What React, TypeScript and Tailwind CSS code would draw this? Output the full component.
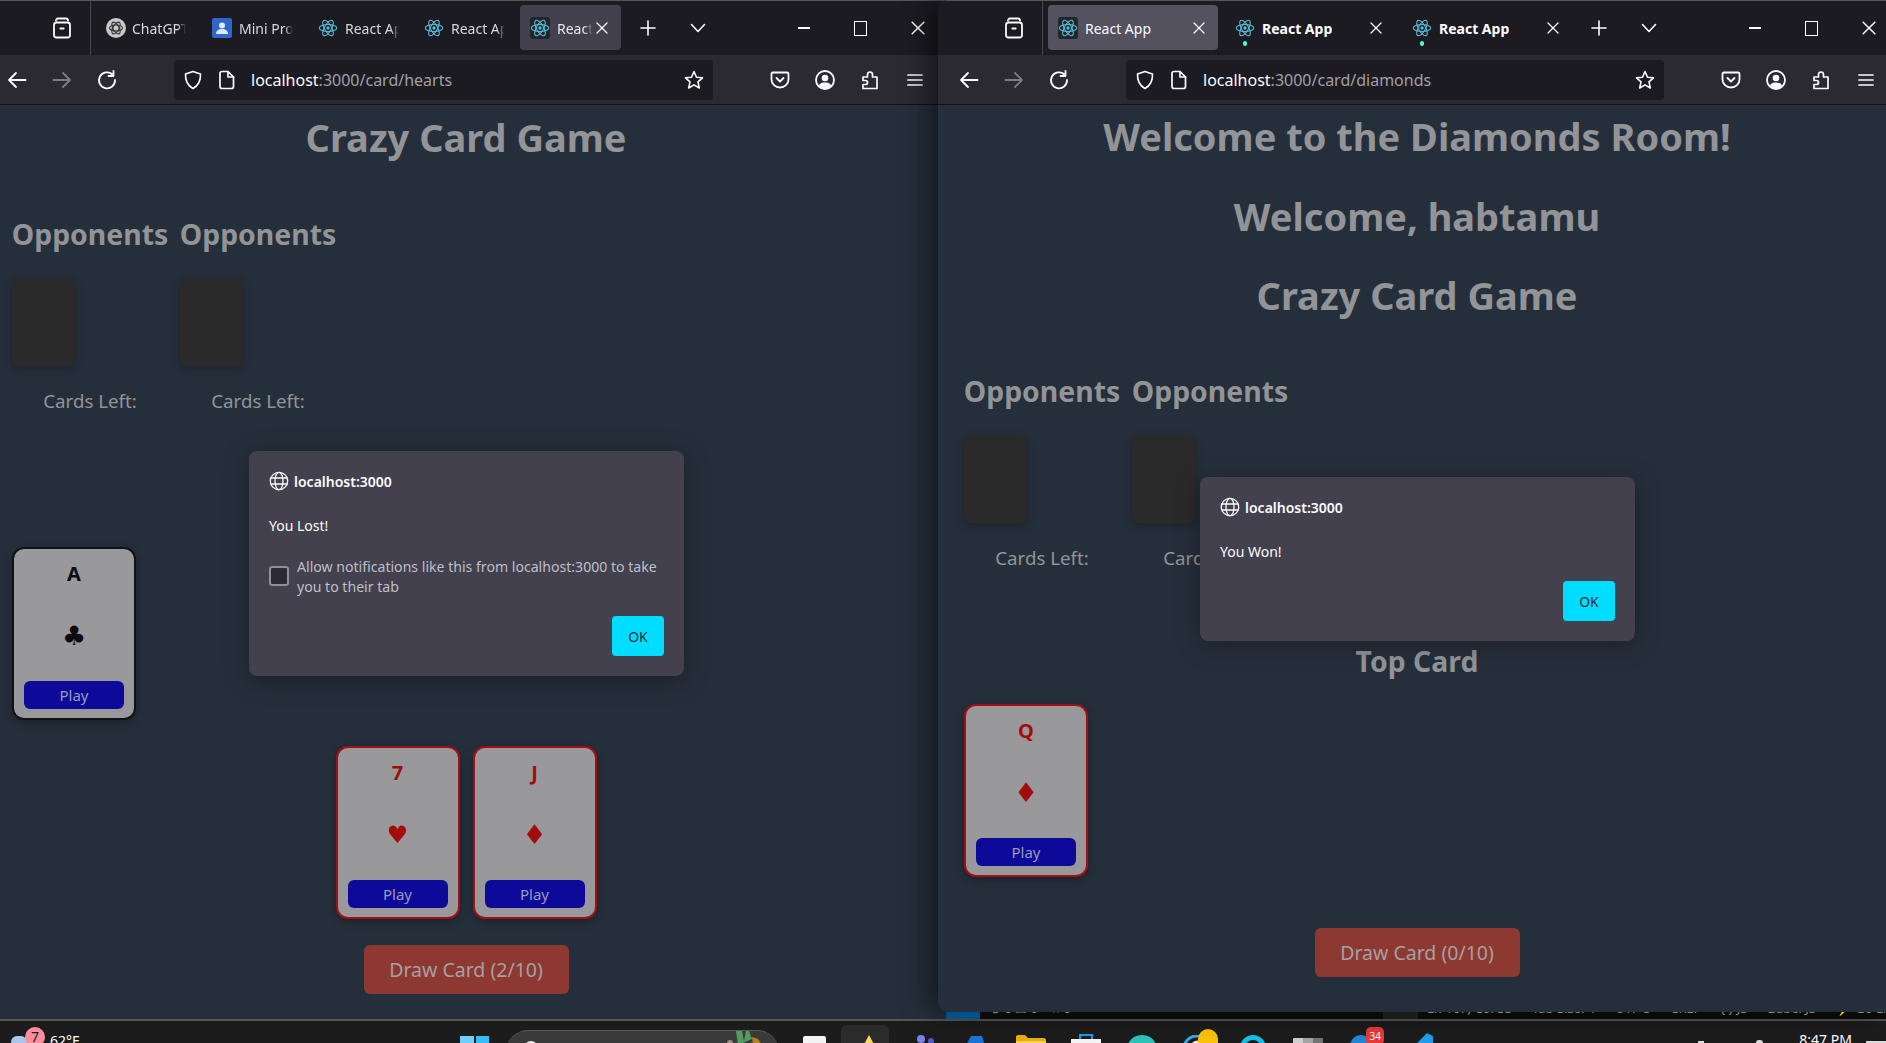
import React from "react";

const UI = "font-['Noto_Sans','Open_Sans',sans-serif]";

function ReactIcon({ boxed }: { boxed?: boolean }) {
  return (
    <span className={`flex w-[20px] h-[22px] items-center justify-center shrink-0 rounded-[3px] ${boxed ? "bg-[#20262c]" : ""}`}>
      <svg width="20" height="20" viewBox="0 0 24 24" fill="none" stroke="#58bcd6" strokeWidth="1.3">
        <ellipse cx="12" cy="12" rx="10.5" ry="4.2" />
        <ellipse cx="12" cy="12" rx="10.5" ry="4.2" transform="rotate(60 12 12)" />
        <ellipse cx="12" cy="12" rx="10.5" ry="4.2" transform="rotate(120 12 12)" />
        <circle cx="12" cy="12" r="2" fill="#58bcd6" stroke="none" />
      </svg>
    </span>
  );
}

function GptIcon() {
  return (
    <svg width="20" height="20" viewBox="0 0 20 20" className="shrink-0">
      <circle cx="10" cy="10" r="10" fill="#c9c9c9" />
      <g fill="none" stroke="#333" strokeWidth="1.2">
        <ellipse cx="10" cy="10" rx="6.5" ry="3" />
        <ellipse cx="10" cy="10" rx="6.5" ry="3" transform="rotate(60 10 10)" />
        <ellipse cx="10" cy="10" rx="6.5" ry="3" transform="rotate(120 10 10)" />
      </g>
    </svg>
  );
}

function MiniIcon() {
  return (
    <svg width="20" height="20" viewBox="0 0 20 20" className="shrink-0">
      <rect width="20" height="20" rx="2" fill="#2f66c9" />
      <circle cx="10" cy="7.5" r="3" fill="#dfe8f7" />
      <path d="M4 16c0-3.2 2.6-5 6-5s6 1.8 6 5z" fill="#dfe8f7" />
    </svg>
  );
}

const S = { fill: "none", stroke: "currentColor", strokeWidth: 1.8, strokeLinecap: "round" as const, strokeLinejoin: "round" as const };

const Archive = () => (
  <svg width="20" height="22" viewBox="0 0 20 22" {...S}>
    <path d="M4 3.5c0-1.2.8-2 2-2h8c1.200 0 2 .8 2 2" />
    <rect x="2" y="5.500" width="16" height="15" rx="2.500" />
    <path d="M8.500 11.500h3" strokeWidth="2.200" />
  </svg>
);
const Cross = ({ s = 12 }: { s?: number }) => (
  <svg width={s} height={s} viewBox="0 0 12 12" {...S} strokeWidth={1.3}>
    <path d="M1 1l10 10M11 1L1 11" />
  </svg>
);
const Plus = () => (
  <svg width="16" height="16" viewBox="0 0 16 16" {...S} strokeWidth={1.6}>
    <path d="M8 1v14M1 8h14" />
  </svg>
);
const Chevron = () => (
  <svg width="16" height="10" viewBox="0 0 16 10" {...S} strokeWidth={1.6}>
    <path d="M1.500 1.500L8 8.500l6.500-7" />
  </svg>
);
const Back = () => (
  <svg width="20" height="18" viewBox="0 0 20 18" {...S}>
    <path d="M18.500 9H2M9 2L2 9l7 7" />
  </svg>
);
const Forward = () => (
  <svg width="20" height="18" viewBox="0 0 20 18" {...S}>
    <path d="M1.500 9H18M11 2l7 7-7 7" />
  </svg>
);
const Reload = () => (
  <svg width="20" height="20" viewBox="0 0 20 20" {...S}>
    <path d="M15.500 4.500A8 8 0 1 0 18 10" />
    <path d="M16.500 1v5h-5" />
  </svg>
);
const Shield = () => (
  <svg width="18" height="20" viewBox="0 0 18 20" {...S} strokeWidth={1.6}>
    <path d="M9 1.500l7.500 2.500c.3 6.500-2 11.500-7.500 14.500C3.500 15.500 1.200 10.500 1.500 4z" />
  </svg>
);
const FileIcon = () => (
  <svg width="16" height="20" viewBox="0 0 16 20" {...S} strokeWidth={1.7}>
    <path d="M3 1.500h6l5.500 5.500v9.500c0 1.200-.8 2-2 2H3c-1.200 0-2-.8-2-2v-13c0-1.200.8-2 2-2z" />
    <path d="M9 1.500V7h5.500" />
  </svg>
);
const Star = () => (
  <svg width="20" height="20" viewBox="0 0 20 20" {...S} strokeWidth={1.6}>
    <path d="M10 1.500l2.500 5.700 6 .6-4.500 4.100 1.300 6.100L10 14.900 4.700 18l1.300-6.100L1.500 7.800l6-.6z" />
  </svg>
);
const Pocket = () => (
  <svg width="20" height="18" viewBox="0 0 20 18" {...S}>
    <path d="M3 1.500h14c1 0 1.500.6 1.500 1.500v5.500c0 4.500-3.800 8-8.500 8s-8.500-3.500-8.500-8V3c0-.9.5-1.500 1.500-1.500z" />
    <path d="M6.500 7l3.500 3.500L13.500 7" />
  </svg>
);
const Account = () => (
  <svg width="20" height="20" viewBox="0 0 20 20">
    <circle cx="10" cy="10" r="9" fill="none" stroke="currentColor" strokeWidth="1.800" />
    <circle cx="10" cy="8" r="3.300" fill="currentColor" />
    <path d="M3.800 15.500C5 13 7.300 12.500 10 12.500s5 .5 6.200 3A8 8 0 0 1 3.800 15.500z" fill="currentColor" />
  </svg>
);
const Puzzle = () => (
  <svg width="18" height="20" viewBox="0 0 18 20" {...S} strokeWidth={1.7}>
    <path d="M2 7h4.500V4.500a2.500 2.500 0 0 1 5 0V7H16v11.500H2v-4h2.500a2 2 0 0 0 0-4H2z" />
  </svg>
);
const Menu = () => (
  <svg width="16" height="14" viewBox="0 0 16 14" {...S} strokeWidth={1.7}>
    <path d="M1 2h14M1 7h14M1 12h14" />
  </svg>
);
const Globe = () => (
  <svg width="20" height="20" viewBox="0 0 20 20" fill="none" stroke="#fbfbfe" strokeWidth="1.300" className="shrink-0">
    <circle cx="10" cy="10" r="8.700" />
    <ellipse cx="10" cy="10" rx="4" ry="8.700" />
    <path d="M1.800 7h16.400M1.800 13h16.400" />
  </svg>
);

type Tab = {
  icon: React.ReactNode;
  label: string;
  active?: boolean;
  close?: boolean;
  dot?: boolean;
  labelClass: string;
};

function Browser({
  tabs,
  tabClass,
  gapClass,
  activeBg,
  host,
  path,
  urlClass,
  insetClass,
}: {
  tabs: Tab[];
  tabClass: string;
  gapClass: string;
  activeBg: string;
  host: string;
  path: string;
  urlClass: string;
  insetClass: string;
}) {
  return (
    <div className={`${UI} shrink-0`}>
      <div className={`flex h-[55px] bg-[#1c1b22] border-t border-[#55555a] text-[#fbfbfe] overflow-hidden ${insetClass}`}>
        <div className="w-[34px] ml-[45px] flex items-center justify-center h-[54px] shrink-0">
          <Archive />
        </div>
        <div className="w-px h-[54px] ml-[11px] bg-[#4a4a50] shrink-0" />
        <div className={`flex ml-[5px] mt-[4px] h-[45px] shrink-0 ${gapClass}`}>
          {tabs.map((t, i) => (
            <div
              key={i}
              className={`relative flex items-center pl-[10px] rounded-[4px] shrink-0 ${tabClass} ${t.active ? activeBg : ""}`}
            >
              {t.icon}
              <span className={`overflow-hidden whitespace-nowrap pt-[1px] ${t.labelClass}`}>{t.label}</span>
              {t.close && (
                <span className="ml-auto mr-[13px]">
                  <Cross />
                </span>
              )}
              {t.dot && <span className="absolute left-[18px] top-[36px] w-[4px] h-[5px] rounded-full bg-[#54ffbd]" />}
            </div>
          ))}
        </div>
        <div className="w-[50px] ml-[2px] h-[54px] flex items-center justify-center shrink-0">
          <Plus />
        </div>
        <div className="w-[50px] h-[54px] flex items-center justify-center shrink-0">
          <Chevron />
        </div>
        <div className="w-[57px] ml-[52px] h-[54px] flex items-center justify-center shrink-0">
          <span className="w-[12px] h-[1.500px] bg-[#fbfbfe]" />
        </div>
        <div className="w-[57px] h-[54px] flex items-center justify-center shrink-0">
          <span className="w-[13px] h-[15px] border border-[#fbfbfe]" />
        </div>
        <div className="w-[57px] h-[54px] flex items-center justify-center shrink-0">
          <Cross s={14} />
        </div>
      </div>
      <div className={`flex items-center h-[50px] bg-[#2b2a33] border-b border-[#111118] text-[#fbfbfe] overflow-hidden ${insetClass}`}>
        <div className="w-[34px] flex justify-center shrink-0"><Back /></div>
        <div className="w-[34px] ml-[11px] flex justify-center text-[#7c7c84] shrink-0"><Forward /></div>
        <div className="w-[34px] ml-[11px] flex justify-center shrink-0"><Reload /></div>
        <div className={`flex items-center h-[40px] ml-[50px] bg-[#1c1b22] rounded-[4px] pl-[10px] pr-[9px] shrink-0 ${urlClass}`}>
          <Shield />
          <span className="ml-[17px]"><FileIcon /></span>
          <span className="ml-[16px] mt-[1px] text-[16px] whitespace-nowrap">
            <span className="text-[#fbfbfe]">{host}</span>
            <span className="text-[#a0a0a6]">{path}</span>
          </span>
          <span className="ml-auto"><Star /></span>
        </div>
        <div className="w-[45px] ml-[44px] flex justify-center shrink-0"><Pocket /></div>
        <div className="w-[45px] flex justify-center shrink-0"><Account /></div>
        <div className="w-[45px] flex justify-center shrink-0"><Puzzle /></div>
        <div className="w-[45px] flex justify-center shrink-0"><Menu /></div>
      </div>
    </div>
  );
}

const PAGE = "font-['Noto_Sans',sans-serif] text-[#929497]";

function Heading({ children, className = "" }: { children: React.ReactNode; className?: string }) {
  return <h1 className={`text-center text-[38px] leading-[38px] pb-[2px] font-bold whitespace-nowrap ${className}`}>{children}</h1>;
}

function Opponent() {
  return (
    <div className="w-[156px] flex flex-col items-center">
      <h2 className="text-[28.4px] leading-[34px] pb-[2px] font-bold whitespace-nowrap">Opponents</h2>
      <div className="self-start mt-[25px] w-[63px] h-[88px] rounded-[6px] bg-[#2a2a2b] shadow-[0_3px_8px_rgba(0,0,0,0.25)]" />
      <div className="mt-[23px] text-[18.7px] leading-[24px]">Cards Left:</div>
    </div>
  );
}

function Opponents({ className = "" }: { className?: string }) {
  return (
    <div className={`flex gap-[12px] pl-[12px] ${className}`}>
      <Opponent />
      <Opponent />
    </div>
  );
}

function PlayingCard({ rank, suit, suitClass, red }: { rank: string; suit: string; suitClass: string; red?: boolean }) {
  return (
    <div
      className={`w-[124px] h-[173px] shrink-0 rounded-[12px] border-2 bg-[#99989a] flex flex-col items-center shadow-[0_3px_8px_rgba(0,0,0,0.3)] ${
        red ? "border-[#a30f14] text-[#a30c0c]" : "border-[#111114] text-[#0c0c0e]"
      }`}
    >
      <div className="mt-[11px] text-[20px] leading-[28px] font-bold">{rank}</div>
      <div className={`mt-[28px] h-[40px] leading-[40px] font-['DejaVu_Sans',sans-serif] ${suitClass}`}>{suit}</div>
      <button className="mt-[25px] w-[100px] h-[28px] rounded-[6px] bg-[#0d0a99] text-[15px] text-[#9a9ab8]">Play</button>
    </div>
  );
}

function DrawButton({ children, className = "" }: { children: React.ReactNode; className?: string }) {
  return (
    <button className={`block w-[205px] h-[49px] rounded-[6px] bg-[#8e3832] text-[19.5px] text-[#a5a0a0] ${className}`}>
      {children}
    </button>
  );
}

function Dialog({
  message,
  allow,
  className,
}: {
  message: string;
  allow?: boolean;
  className: string;
}) {
  return (
    <div className={`absolute w-[435px] rounded-[8px] bg-[#42414d] pt-[20px] px-[20px] shadow-[0_4px_24px_rgba(0,0,0,0.35)] ${UI} ${className}`}>
      <div className="flex items-center h-[20px] gap-[5px] text-[14px] font-semibold text-[#fbfbfe]">
        <Globe />
        localhost:3000
      </div>
      <p className="mt-[25px] h-[20px] text-[14px] leading-[20px] text-[#fbfbfe]">{message}</p>
      {allow && (
        <label className="flex items-center mt-[19px] gap-[8px]">
          <span className="w-[20px] h-[20px] shrink-0 rounded-[3px] border-2 border-[#8f8f9d] bg-[#2b2a33]" />
          <span className="text-[14.1px] leading-[20px] pt-[2px] text-[#bfbfc9]">
            Allow notifications like this from localhost:3000 to take you to their tab
          </span>
        </label>
      )}
      <div className={`flex justify-end pb-[20px] mt-[19px]`}>
        <button className="w-[52px] h-[40px] rounded-[4px] bg-[#00ddff] text-[14px] text-[#2b2a33]">OK</button>
      </div>
    </div>
  );
}

function StatusStrip() {
  return (
    <div className="ml-[8px] h-[7px] bg-[#0a0a0a] flex overflow-hidden font-['Noto_Sans',sans-serif] text-[13px] leading-[18px] text-[#8a8a8a]">
      <div className="w-[34px] h-full bg-[#00508b] shrink-0" />
      <div className="flex -mt-[13px] ml-[10px] w-[393px] shrink-0 gap-[14px] whitespace-nowrap">
        <span>⊗ 0 ⚠ 0</span>
        <span>⑃ 0</span>
      </div>
      <div className="w-[35px] h-full bg-[#1c1c1e] shrink-0" />
      <div className="flex -mt-[13px] ml-[9px] gap-[20px] whitespace-nowrap">
        <span>Ln 167, Col 33</span>
        <span>Tab Size: 4</span>
        <span>UTF-8</span>
        <span>CRLF</span>
        <span>{"{ }"} JS</span>
        <span>Babel JS</span>
        <span>⚡ Go Live</span>
      </div>
    </div>
  );
}

function Taskbar() {
  return (
    <div className="relative h-[24px] border-t-2 border-[#555] bg-[#1c1c1c] overflow-hidden font-['Noto_Sans',sans-serif]">
      <div className="flex items-start h-full">
        {/* weather */}
        <div className="relative w-[48px] h-full shrink-0">
          <span className="absolute left-[11px] top-[15px] w-[16px] h-[12px] rounded-full bg-[#a9c8ee]" />
          <span className="absolute left-[25px] top-[6px] w-[20px] h-[20px] rounded-full bg-[#ff8d9b] text-[14px] leading-[20px] text-center text-[#1c1c1c]">7</span>
        </div>
        <span className="ml-[2px] mt-[10px] text-[14px] leading-[20px] text-white">62°F</span>
        {/* start */}
        <div className="ml-[381px] mt-[15px] grid grid-cols-2 gap-[2px] w-[29px] shrink-0">
          <span className="h-[14px] bg-[#6fd0fb]" />
          <span className="h-[14px] bg-[#35bdf7]" />
        </div>
        {/* search */}
        <div className="relative ml-[17px] mt-[9px] w-[273px] h-[24px] shrink-0 rounded-t-[22px] bg-[#3a3a3a] border-t border-[#5a5a5a]">
          <span className="absolute left-[18px] top-[10px] w-[14px] h-[14px] rounded-full border-2 border-[#eee]" />
          <svg className="absolute left-[218px] top-0" width="46" height="14" viewBox="0 0 46 14">
            <path d="M14 14L12 0h6l2 10 2-10h3l3 8" fill="#4f9d62" />
            <path d="M28 6l6 2 4 6h-9z" fill="#b58321" />
            <circle cx="6" cy="12" r="3" fill="#9a8f88" />
          </svg>
        </div>
        {/* app icons */}
        <span className="ml-[24px] mt-[15px] w-[23px] h-[20px] bg-[#f4f4f4] rounded-[2px] shrink-0" />
        <div className="relative ml-[15px] mt-[4px] w-[48px] h-[24px] shrink-0 rounded-t-[6px] bg-[#2b2b2b]">
          <svg className="absolute left-[12px] top-[9px]" width="26" height="16" viewBox="0 0 26 16">
            <path d="M2 16l4-7 3 4z" fill="#f17f2f" />
            <path d="M8 16L16 1l8 15z" fill="#fbd85a" />
          </svg>
        </div>
        <svg className="ml-[17px] mt-[14px] shrink-0" width="30" height="14" viewBox="0 0 30 14">
          <circle cx="15" cy="4" r="4" fill="#7b83eb" />
          <circle cx="25" cy="6" r="3" fill="#5059c9" />
          <rect x="4" y="8" width="18" height="6" fill="#6a70d8" />
        </svg>
        <svg className="ml-[28px] mt-[14px] shrink-0" width="22" height="14" viewBox="0 0 22 14">
          <path d="M0 14L7 1h11l4 13z" fill="#1976d8" />
        </svg>
        <svg className="ml-[30px] mt-[14px] shrink-0" width="30" height="14" viewBox="0 0 30 14">
          <path d="M0 14V2c0-1 .5-2 2-2h7l3 3h16c1 0 2 1 2 2v9z" fill="#e9ae10" />
          <rect y="6" width="30" height="2" fill="#fad04d" />
        </svg>
        <svg className="ml-[25px] mt-[13px] shrink-0" width="30" height="16" viewBox="0 0 30 16">
          <path d="M9 5V1h12v4" fill="none" stroke="#18a0f0" strokeWidth="2" />
          <rect y="5" width="30" height="11" fill="#f5f5f5" />
        </svg>
        <svg className="ml-[26px] mt-[14px] shrink-0" width="30" height="14" viewBox="0 0 30 14">
          <path d="M0 14C1 5 7 0 15 0s14 5 15 14z" fill="#2cc3b8" />
          <path d="M18 14C22 8 26 6 30 14z" fill="#84d64c" />
        </svg>
        <div className="relative ml-[26px] w-[36px] h-full shrink-0">
          <svg className="absolute left-0 top-[14px]" width="26" height="14" viewBox="0 0 26 14">
            <path d="M1 14C1 6 7 1 14 1s12 5 12 13" fill="none" stroke="#3ba7e6" strokeWidth="3" />
            <path d="M8 14c0-4 3-7 7-7s6 3 6 7" fill="none" stroke="#e8e8e8" strokeWidth="3" />
          </svg>
          <span className="absolute left-[15px] top-[8px] w-[20px] h-[26px] rounded-full bg-[#fdc20a]" />
        </div>
        <span className="ml-[21px] mt-[14px] w-[26px] h-[26px] rounded-full border-[5px] border-[#17bfe8] shrink-0" />
        <div className="ml-[27px] mt-[17px] w-[30px] h-[10px] flex shrink-0 rounded-t-[1px] overflow-hidden">
          <span className="w-[10px] bg-[#cfcfcf]" />
          <span className="w-[10px] bg-[#a4a4a4]" />
          <span className="w-[10px] bg-[#757575]" />
        </div>
        <div className="relative ml-[27px] w-[34px] h-full shrink-0">
          <span className="absolute left-0 top-[14px] w-[22px] h-[22px] rounded-full bg-[#1f86d6]" />
          <span className="absolute left-[16px] top-[6px] w-[18px] h-[18px] rounded-[5px] bg-[#e83a3a] text-[10px] leading-[18px] text-center text-white">34</span>
        </div>
        <svg className="ml-[19px] mt-[12px] shrink-0" width="30" height="18" viewBox="0 0 30 18">
          <path d="M0 12L14 18V10zM14 10L24 0l6 3v15H14z" fill="#1f9cf0" />
        </svg>
        {/* tray */}
        <span className="ml-[265px] mt-[20px] w-[6px] h-[2px] bg-[#ddd] shrink-0" />
        <span className="ml-[52px] mt-[19px] w-[7px] h-[3px] rounded-t-full bg-[#ddd] shrink-0" />
        <span className="ml-[36px] mt-[9px] text-[14px] leading-[20px] text-white whitespace-nowrap">8:47 PM</span>
        <span className="ml-[14px] mt-[20px] w-[20px] h-[3px] bg-[#ddd] shrink-0" />
      </div>
    </div>
  );
}

const t = (label: string, icon: React.ReactNode, labelClass: string, extra: Partial<Tab> = {}): Tab => ({
  label,
  icon,
  labelClass,
  ...extra,
});

const leftTabs: Tab[] = [
  t("ChatGPT", <GptIcon />, "ml-[6px] w-[54px] text-[14px] [mask-image:linear-gradient(to_right,black_85%,transparent)] text-[#d8d8dc]"),
  t("Mini Project", <MiniIcon />, "ml-[7px] w-[54px] text-[14px] [mask-image:linear-gradient(to_right,black_85%,transparent)] text-[#d8d8dc]"),
  t("React App", <ReactIcon />, "ml-[7px] w-[54px] text-[14px] [mask-image:linear-gradient(to_right,black_85%,transparent)] text-[#d8d8dc]"),
  t("React App", <ReactIcon />, "ml-[7px] w-[54px] text-[14px] [mask-image:linear-gradient(to_right,black_85%,transparent)] text-[#d8d8dc]"),
  t("React App", <ReactIcon boxed />, "ml-[7px] w-[36px] text-[14px] [mask-image:linear-gradient(to_right,black_75%,transparent)] text-[#e8e8ec]", { active: true, close: true }),
];

const rightTabs: Tab[] = [
  t("React App", <ReactIcon boxed />, "ml-[7px] text-[14px] text-[#fbfbfe]", { active: true, close: true }),
  t("React App", <ReactIcon />, "ml-[7px] text-[14px] font-bold text-white", { close: true, dot: true }),
  t("React App", <ReactIcon />, "ml-[7px] text-[14px] font-bold text-white", { close: true, dot: true }),
];

export default function App() {
  return (
    <div className="w-[1886px] h-[1043px] overflow-hidden bg-[#1c1c1c]">
      <div className="flex h-[1019px]">
        {/* left window */}
        <div className="w-[946px] shrink-0 flex flex-col bg-[#252f3b]">
          <Browser
            tabs={leftTabs}
            tabClass="w-[101px]"
            gapClass="gap-[5px]"
            activeBg="bg-[#42414d]"
            host="localhost"
            path=":3000/card/hearts"
            urlClass="w-[539px]"
            insetClass=""
          />
          <main className={`relative flex-1 ${PAGE}`}>
            <div className="w-[932px]">
              <Heading className="pt-[13px]">Crazy Card Game</Heading>
              <Opponents className="mt-[59px]" />
              <div className="mt-[134px] pl-[12px]">
                <PlayingCard rank="A" suit="♣" suitClass="text-[27px]" />
              </div>
              <div className="mt-[26px] flex justify-center gap-[13px]">
                <PlayingCard rank="7" suit="♥" suitClass="text-[24px]" red />
                <PlayingCard rank="J" suit="♦" suitClass="text-[27px]" red />
              </div>
              <div className="mt-[26px] flex justify-center">
                <DrawButton>Draw Card (2/10)</DrawButton>
              </div>
            </div>
            <Dialog
              className="left-[249px] top-[346px]"
              message="You Lost!"
              allow
            />
          </main>
        </div>

        {/* right window */}
        <div className="relative z-10 -ml-[8px] w-[948px] shrink-0 flex flex-col">
          <div className="h-[1012px] flex flex-col bg-[#252f3b] rounded-l-[10px] overflow-hidden shadow-[-8px_0_28px_rgba(0,0,0,0.55)]">
            <Browser
              tabs={rightTabs}
              tabClass="w-[170px]"
              gapClass="gap-[7px]"
              activeBg="bg-[#53525e]"
              host="localhost"
              path=":3000/card/diamonds"
              urlClass="w-[538px]"
              insetClass="pl-[14px]"
            />
            <main className={`relative flex-1 pl-[14px] ${PAGE}`}>
              <div className="w-[930px]">
                <Heading className="pt-[12px]">Welcome to the Diamonds Room!</Heading>
                <Heading className="mt-[40px]">Welcome, habtamu</Heading>
                <Heading className="mt-[39px]">Crazy Card Game</Heading>
                <Opponents className="mt-[58px]" />
                <h2 className="mt-[74px] text-center text-[28.4px] leading-[34px] pb-[2px] font-bold">Top Card</h2>
                <div className="mt-[24px] pl-[12px]">
                  <PlayingCard rank="Q" suit="♦" suitClass="text-[27px]" red />
                </div>
                <div className="mt-[51px] flex justify-center">
                  <DrawButton>Draw Card (0/10)</DrawButton>
                </div>
              </div>
              <Dialog className="left-[262px] top-[372px]" message="You Won!" />
            </main>
          </div>
          <StatusStrip />
        </div>
      </div>
      <Taskbar />
    </div>
  );
}
